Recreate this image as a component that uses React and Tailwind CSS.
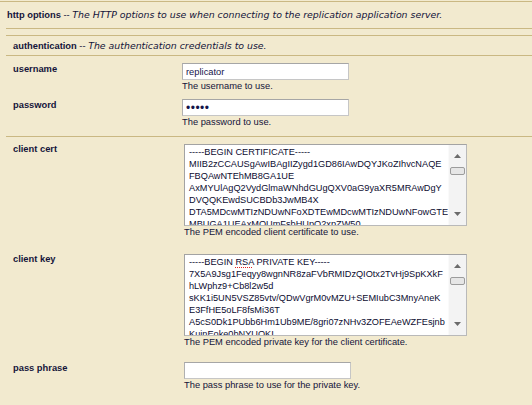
import React from 'react'

const certLines = [
  '-----BEGIN CERTIFICATE-----',
  'MIIB2zCCAUSgAwIBAgIIZygd1GD86IAwDQYJKoZIhvcNAQE',
  'FBQAwNTEhMB8GA1UE',
  'AxMYUlAgQ2VydGlmaWNhdGUgQXV0aG9yaXR5MRAwDgY',
  'DVQQKEwdSUCBDb3JwMB4X',
  'DTA5MDcwMTIzNDUwNFoXDTEwMDcwMTIzNDUwNFowGTEX',
  'MBUGA1UEAxMOUmFsbHUpQ2xpZW50',
]

const keyLines = [
  null,
  '7X5A9Jsg1Feqyy8wgnNR8zaFVbRMIDzQIOtx2TvHj9SpKXkF',
  'hLWphz9+Cb8l2w5d',
  'sKK1i5UN5VSZ85vtv/QDwVgrM0vMZU+SEMIubC3MnyAneK',
  'E3FfHE5oLF8fsMi36T',
  'A5cS0Dk1PUbb6Hm1Ub9ME/8gri07zNHv3ZOFEAeWZFEsjnb',
  'KujnEoke0bNYUOKI',
]

function Scrollbar() {
  return (
    <div className="w-[18px] flex flex-col bg-[#f3f3f3] border-l border-[#fafafa]">
      <div className="h-[22px] flex items-center justify-center">
        <svg width="7" height="4" viewBox="0 0 7 4">
          <path d="M0 4 L3.5 0 L7 4 Z" fill="#6b6b6b" />
        </svg>
      </div>
      <div className="h-[8px] mx-[1px] rounded-[2px] border border-[#9c9c9c] bg-[#e6e6e6]" />
      <div className="flex-1" />
      <div className="h-[22px] flex items-center justify-center">
        <svg width="7" height="4" viewBox="0 0 7 4">
          <path d="M0 0 L7 0 L3.5 4 Z" fill="#6b6b6b" />
        </svg>
      </div>
    </div>
  )
}

function FakeTextarea({ children }) {
  return (
    <div className="mt-[1px] w-[283px] h-[82px] flex bg-white border border-[#b9b9b9] border-t-[#a3a3a3] border-l-[#a3a3a3]">
      <div className="flex-1 overflow-hidden pl-[4px] pt-[1px] text-[#0c0c30] text-[9.2px] whitespace-nowrap">
        {children}
      </div>
      <Scrollbar />
    </div>
  )
}

function Field({ label, labelWidth, children, hint, bottom }) {
  return (
    <div className={'flex ' + (bottom || '')}>
      <div className={labelWidth + ' pl-[7px] font-bold'}>{label}</div>
      <div>
        {children}
        <div>{hint}</div>
      </div>
    </div>
  )
}

const inputCls =
  'block w-[167px] h-[17px] px-[3px] bg-white border border-[#c6c6c6] border-t-[#a6a6a6] border-l-[#b0b0b0] text-[#14144a] outline-none'

export default function App() {
  return (
    <div className="w-[532px] h-[405px] overflow-hidden bg-[#f2eacf] text-[#14143a] font-['Liberation_Sans',Arial,sans-serif] text-[9.33px] leading-[12px]">
      <div className="mt-[1px] border-t border-[#cab883] pt-[7px] pb-[7px] pl-[7px]">
        <b>http options</b> --{' '}
        <i className="font-['DejaVu_Sans',sans-serif] text-[9.4px]">
          The HTTP options to use when connecting to the replication application server.
        </i>
      </div>

      <div className="ml-[6px] border-t border-[#cab883]">
        <div className="mt-[6px] border-t border-b border-[#cab883] pt-[4px] pb-[3px] pl-[7px]">
          <b>authentication</b> --{' '}
          <i className="font-['DejaVu_Sans',sans-serif] text-[9.4px]">The authentication credentials to use.</i>
        </div>

        <div className="flex flex-col gap-[7px] pt-[7px] pb-[8px] border-b border-[#cab883]">
          <Field label="username" labelWidth="w-[176px]" hint="The username to use.">
            <input className={inputCls} readOnly value="replicator" />
          </Field>
          <Field label="password" labelWidth="w-[176px]" hint="The password to use.">
            <input className={inputCls + ' text-[12px] tracking-[0.5px]'} type="password" readOnly value="abcde" />
          </Field>
        </div>

        <div className="flex flex-col gap-[7px] pt-[6px]">
          <Field
            label="client cert"
            labelWidth="w-[178px]"
            hint="The PEM encoded client certificate to use."
            bottom="pb-[8px]"
          >
            <FakeTextarea>
              {certLines.map((l, i) => (
                <div key={i}>{l}</div>
              ))}
            </FakeTextarea>
          </Field>
          <Field
            label="client key"
            labelWidth="w-[178px]"
            hint="The PEM encoded private key for the client certificate."
            bottom="pb-[7px]"
          >
            <FakeTextarea>
              {keyLines.map((l, i) =>
                i === 0 ? (
                  <div key={i}>
                    -----BEGIN{' '}
                    <span className="underline decoration-dotted decoration-[#e02020] underline-offset-2">RSA</span>{' '}
                    PRIVATE KEY-----
                  </div>
                ) : (
                  <div key={i}>{l}</div>
                )
              )}
            </FakeTextarea>
          </Field>
          <Field label="pass phrase" labelWidth="w-[178px]" hint="The pass phrase to use for the private key.">
            <input className={inputCls} type="password" readOnly value="" />
          </Field>
        </div>
      </div>
    </div>
  )
}
